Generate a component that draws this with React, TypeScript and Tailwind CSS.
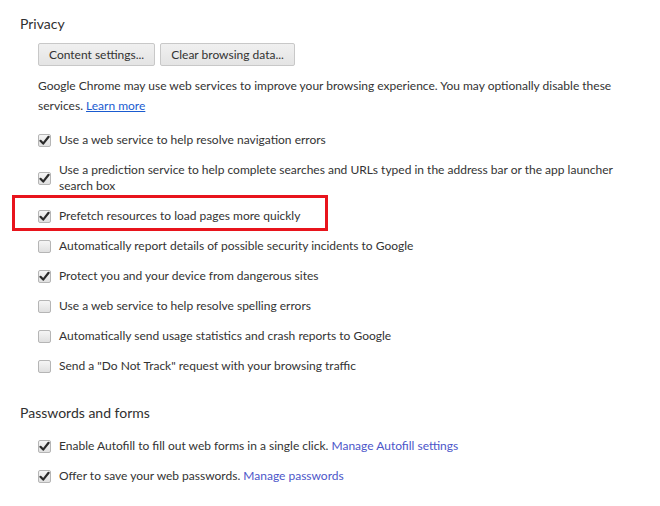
import React from 'react';

const font = { fontFamily: 'Lato, "Open Sans", Arial, sans-serif' };

// Chrome-style checkbox
const Box = ({ checked }: { checked: boolean }) => (
  <span className="flex h-[13px] w-[13px] flex-shrink-0 items-center justify-center rounded-[2px] border border-[#b5b5b5] bg-gradient-to-b from-[#f5f5f5] to-[#e0e0e0]">
    {checked && (
      <svg width="11" height="11" viewBox="0 0 11 11">
        <path d="M1.5 5.8 L4.2 8.6 L9.6 1.8" fill="none" stroke="#2b2b2b" strokeWidth="2.2" strokeLinecap="round" strokeLinejoin="round" />
      </svg>
    )}
  </span>
);

const Row = ({ checked, children, className = '' }: { checked: boolean; children: React.ReactNode; className?: string }) => (
  <div className={`flex items-center gap-2 ${className}`}>
    <Box checked={checked} />
    <div className="whitespace-nowrap leading-[16px]">{children}</div>
  </div>
);

const Button = ({ children }: { children: React.ReactNode }) => (
  <button className="h-[23px] rounded-[2px] border border-[#c8c8c8] bg-gradient-to-b from-[#f0f0f0] to-[#e4e4e4] px-[10px] text-[12px] leading-none text-[#333]">
    {children}
  </button>
);

export default function App() {
  return (
    <div className="h-[506px] w-[660px] bg-white text-[12px] text-[#333]" style={font}>
      <div className="pl-5 pt-[14px]">
        <h3 className="text-[14px] leading-[20px] text-[#303030]">Privacy</h3>
        <div className="pl-[18px]">
          <div className="mt-[9px] flex gap-[5px]">
            <Button>Content settings...</Button>
            <Button>Clear browsing data...</Button>
          </div>
          <p className="mt-[10px] whitespace-nowrap leading-[20px]">
            Google Chrome may use web services to improve your browsing experience. You may optionally disable these
            <br />
            services. <a className="text-[#1a5bd0] underline">Learn more</a>
          </p>
          <div className="mt-[9px] flex flex-col">
            <Row checked className="h-[30px]">Use a web service to help resolve navigation errors</Row>
            <Row checked className="h-[46px]">
              Use a prediction service to help complete searches and URLs typed in the address bar or the app launcher
              <br />
              search box
            </Row>
            <div className="relative">
              <div className="pointer-events-none absolute -left-[26px] -top-[6px] h-[36px] w-[316px] border-[3px] border-[#e8141c]" />
              <Row checked className="h-[30px]">Prefetch resources to load pages more quickly</Row>
            </div>
            <Row checked={false} className="h-[30px]">Automatically report details of possible security incidents to Google</Row>
            <Row checked className="h-[30px]">Protect you and your device from dangerous sites</Row>
            <Row checked={false} className="h-[30px]">Use a web service to help resolve spelling errors</Row>
            <Row checked={false} className="h-[30px]">Automatically send usage statistics and crash reports to Google</Row>
            <Row checked={false} className="h-[30px]">Send a "Do Not Track" request with your browsing traffic</Row>
          </div>
        </div>
        <h3 className="mt-[22px] text-[14px] leading-[20px] text-[#303030]">Passwords and forms</h3>
        <div className="mt-[8px] flex flex-col pl-[18px]">
          <Row checked className="h-[30px]">
            Enable Autofill to fill out web forms in a single click.{' '}
            <a className="text-[#4c56c9]">Manage Autofill settings</a>
          </Row>
          <Row checked className="h-[30px]">
            Offer to save your web passwords. <a className="text-[#4c56c9]">Manage passwords</a>
          </Row>
        </div>
      </div>
    </div>
  );
}
